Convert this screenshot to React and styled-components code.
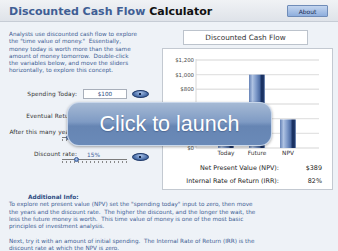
import styled, { createGlobalStyle } from "styled-components";

const GlobalStyle = createGlobalStyle`
  html, body { margin: 0; padding: 0; }
  body {
    background: #eef2f7;
    font-family: "DejaVu Sans", Verdana, sans-serif;
  }
`;

const ticks = [0, 200, 400, 600, 800, 1000, 1200];
const base = 99;
const scale = 14.67 / 200;

const bars = [
  { label: "Today", value: 100, x: 55 },
  { label: "Future", value: 1000, x: 86 },
  { label: "NPV", value: 389, x: 117 },
];

function money(v) {
  return "$" + v.toLocaleString("en-US");
}

function Chart() {
  return (
    <ChartSvg width="169" height="112" viewBox="0 0 169 112">
      <defs>
        <linearGradient id="bar" x1="0" x2="1" y1="0" y2="0">
          <stop offset="0" stopColor="#6582b6" />
          <stop offset="0.22" stopColor="#aec2e2" />
          <stop offset="0.45" stopColor="#7d99c9" />
          <stop offset="0.68" stopColor="#4d6ca4" />
          <stop offset="0.76" stopColor="#1a3263" />
          <stop offset="0.9" stopColor="#1a3263" />
          <stop offset="1" stopColor="#8aa2cc" />
        </linearGradient>
      </defs>
      {ticks.map((t) => {
        const y = base - t * scale;
        return (
          <g key={t}>
            <line x1="33" x2="156" y1={y} y2={y} stroke="#e3e3e3" strokeWidth="1.4" />
            <text x="31" y={y + 2} textAnchor="end" fontSize="5.4" fill="#4a4a4a">
              {money(t)}
            </text>
          </g>
        );
      })}
      <line x1="33" x2="33" y1="10" y2={base} stroke="#d6d6d6" />
      {bars.map((b) => {
        const h = b.value * scale;
        return (
          <g key={b.label}>
            <rect x={b.x} y={base - h} width="16" height={h} fill="url(#bar)" />
            <text x={b.x + 8} y="106" textAnchor="middle" fontSize="5.8" fill="#333">
              {b.label}
            </text>
          </g>
        );
      })}
    </ChartSvg>
  );
}

function Slider({ pct }) {
  return (
    <Track>
      <Knob style={{ left: `${pct}%` }} />
    </Track>
  );
}

export default function App() {
  return (
    <Page>
      <GlobalStyle />
      <Header>
        <Title>
          Discounted Cash Flow <Dark>Calculator</Dark>
        </Title>
        <AboutButton>About</AboutButton>
      </Header>
      <Main>
        <LeftCol>
          <Intro>
            Analysts use discounted cash flow to explore
            <br />
            the "time value of money."&nbsp; Essentially,
            <br />
            money today is worth more than the same
            <br />
            amount of money tomorrow.&nbsp; Double-click
            <br />
            the variables below, and move the sliders
            <br />
            horizontally, to explore this concept.
          </Intro>
          <Row $mt={14}>
            <Label>Spending Today:</Label>
            <Input>$100</Input>
            <Oval />
          </Row>
          <Row $mt={12}>
            <Label>Eventual Return:</Label>
            <Input>$1,000</Input>
            <Oval />
          </Row>
          <Row $mt={6}>
            <Label>After this many years:</Label>
            <Value>5</Value>
            <Oval $push />
          </Row>
          <Slider pct={0} />
          <Row $mt={6}>
            <Label>Discount rate:</Label>
            <Value>15%</Value>
            <Oval $push $down />
          </Row>
          <Slider pct={12} />
        </LeftCol>
        <RightCol>
          <ChartTitle>Discounted Cash Flow</ChartTitle>
          <Panel>
            <Chart />
            <Results>
              <ResultLabel>Net Present Value (NPV):</ResultLabel>
              <ResultValue>$389</ResultValue>
              <ResultLabel>Internal Rate of Return (IRR):</ResultLabel>
              <ResultValue>82%</ResultValue>
            </Results>
          </Panel>
        </RightCol>
      </Main>
      <Info>
        <InfoHead>Additional Info:</InfoHead>
        <InfoText>
          To explore net present value (NPV) set the "spending today" input to zero, then move
          <br />
          the years and the discount rate.&nbsp; The higher the discount, and the longer the wait, the
          <br />
          less the future money is worth.&nbsp; This time value of money is one of the most basic
          <br />
          principles of investment analysis.
        </InfoText>
        <InfoText $gap>
          Next, try it with an amount of initial spending.&nbsp; The Internal Rate of Return (IRR) is the
          <br />
          discount rate at which the NPV is zero.
        </InfoText>
      </Info>
      <Launch>Click to launch</Launch>
    </Page>
  );
}

const Page = styled.div`
  position: relative;
  width: 338px;
  height: 251px;
  overflow: hidden;
  background: #eef2f7;
`;

const Header = styled.header`
  height: 22px;
  box-sizing: border-box;
  display: flex;
  align-items: center;
  justify-content: space-between;
  padding: 1px 10px 0 9px;
  background: linear-gradient(#f0f2f5, #dfe3e9);
  border-bottom: 1px solid #c6ccd5;
`;

const Title = styled.h1`
  margin: 0;
  font-family: "DejaVu Sans", Verdana, sans-serif;
  font-weight: bold;
  font-size: 11px;
  color: #3f5e94;
  letter-spacing: 0;
`;

const Dark = styled.span`
  color: #111;
`;

const AboutButton = styled.button`
  width: 41px;
  height: 12px;
  padding: 0;
  border: 1px solid #6f8cb8;
  border-radius: 1px;
  background: linear-gradient(#c3d5ef, #8eaedd);
  font-family: "DejaVu Sans", Verdana, sans-serif;
  font-size: 6px;
  color: #1d2f55;
`;

const Main = styled.div`
  display: flex;
  padding-top: 8px;
`;

const LeftCol = styled.div`
  width: 162px;
`;

const Intro = styled.p`
  margin: 1px 0 0;
  padding-left: 9px;
  font-size: 5.7px;
  line-height: 7.3px;
  color: #3e5d94;
  white-space: nowrap;
`;

const Row = styled.div`
  display: flex;
  align-items: center;
  height: 10px;
  margin-top: ${(p) => p.$mt}px;
`;

const Label = styled.span`
  width: 77px;
  text-align: right;
  font-size: 5.8px;
  color: #333;
  white-space: nowrap;
  letter-spacing: 0.15px;
`;

const Input = styled.div`
  width: 44px;
  height: 10px;
  box-sizing: border-box;
  margin-left: 6px;
  background: #fff;
  border: 1px solid #a8afba;
  font-size: 5.7px;
  line-height: 8px;
  text-align: center;
  color: #2c4a80;
`;

const Value = styled.span`
  width: 40px;
  margin-left: 10px;
  padding-top: 3px;
  font-size: 5.8px;
  color: #3d5f9a;
`;

const Oval = styled.div`
  width: 15px;
  height: 6px;
  margin-left: 5px;
  margin-top: ${(p) => (p.$down ? 6 : 0)}px;
  border-radius: 50%;
  border: 1px solid #1f3a6b;
  background: radial-gradient(ellipse at 50% 30%, #a7c0e6, #4f73ad 60%, #2a4a82);
  position: relative;

  &::after {
    content: "";
    position: absolute;
    left: 6px;
    top: 2px;
    width: 2px;
    height: 2px;
    background: #10244a;
  }
`;

const Track = styled.div`
  position: relative;
  margin-left: 62px;
  width: 65px;
  height: 5px;
  border-top: 1px solid #7c7c7c;
  background: repeating-linear-gradient(90deg, #8a8a8a 0 1px, transparent 1px 4px) 0 1px / 100% 2px no-repeat;
`;

const Knob = styled.div`
  position: absolute;
  top: -3px;
  width: 5px;
  height: 5px;
  margin-left: 4px;
  border-radius: 50%;
  background: radial-gradient(circle at 40% 35%, #b9cff0, #4b74b8);
  border: 1px solid #3a5f9c;
  box-sizing: border-box;
`;

const RightCol = styled.div`
  width: 171px;
`;

const ChartTitle = styled.div`
  width: 125px;
  height: 15px;
  box-sizing: border-box;
  margin-left: 21px;
  background: #fff;
  border: 1px solid #bcc3cc;
  font-size: 7.3px;
  line-height: 13px;
  text-align: center;
  color: #333;
`;

const Panel = styled.div`
  margin-top: 3px;
  height: 142px;
  box-sizing: border-box;
  background: #fff;
  border: 1px solid #c3c9d1;
`;

const ChartSvg = styled.svg`
  display: block;
  font-family: "DejaVu Sans", Verdana, sans-serif;
`;

const Results = styled.div`
  display: grid;
  grid-template-columns: 1fr 43px;
  margin-top: 1px;
  padding-right: 10px;
  font-size: 6.4px;
  line-height: 13px;
  color: #222;
`;

const ResultLabel = styled.span`
  text-align: right;
  white-space: nowrap;
`;

const ResultValue = styled.span`
  text-align: right;
`;

const Info = styled.section`
  padding: 4px 0 0 9px;
`;

const InfoHead = styled.h2`
  margin: 0 0 0 19px;
  font-size: 5.8px;
  line-height: 7.3px;
  font-weight: bold;
  color: #2a4a82;
`;

const InfoText = styled.p`
  margin: ${(p) => (p.$gap ? "7.3px" : "0")} 0 0;
  font-size: 5.7px;
  line-height: 7.3px;
  color: #3e5d94;
  white-space: nowrap;
`;

const Launch = styled.div`
  position: absolute;
  left: 67px;
  top: 102px;
  width: 205px;
  height: 44px;
  box-sizing: border-box;
  border-radius: 12px;
  border: 1.5px solid rgba(205, 218, 236, 0.95);
  background: linear-gradient(#a5b9d4 0%, #7f9bc4 45%, #6685b3 55%, #6a8ab8 100%);
  box-shadow: 0 1px 3px rgba(0, 0, 0, 0.35);
  display: flex;
  align-items: center;
  justify-content: center;
  font-family: "Liberation Sans", Arial, sans-serif;
  font-size: 21.5px;
  color: #fff;
  text-shadow: 0 1px 1px rgba(40, 60, 100, 0.4);
`;
